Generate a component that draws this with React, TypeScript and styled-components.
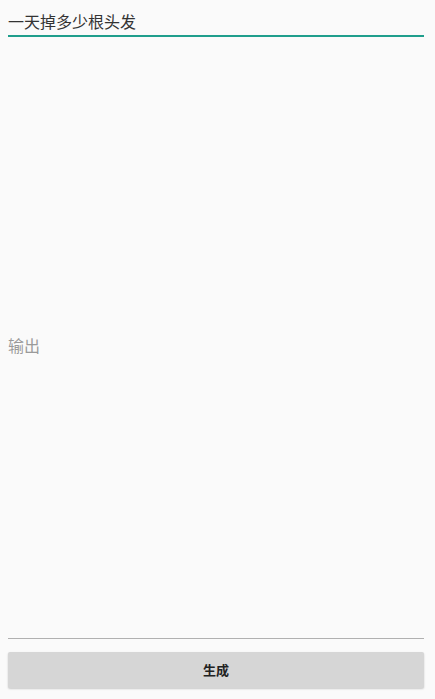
import React from "react";
import styled, { createGlobalStyle } from "styled-components";

const Global = createGlobalStyle`
  html, body { margin: 0; padding: 0; background: #fafafa; }
  body { font-family: Roboto, "Noto Sans CJK SC", "Noto Sans", sans-serif; }
`;

const Page = styled.div`
  height: 699px;
  box-sizing: border-box;
  padding: 0 11px 11px 8px;
  display: flex;
  flex-direction: column;
  background: #fafafa;
`;

const InputField = styled.div`
  height: 37px;
  box-sizing: border-box;
  padding-top: 13px;
  border-bottom: 2px solid #1f9e8c;
  font-size: 16px;
  line-height: 20px;
  color: #333;
  font-family: Roboto, "Noto Sans CJK SC", sans-serif;
`;

const OutputField = styled.div`
  flex: 1;
  display: flex;
  align-items: center;
  padding-top: 14px;
  border-bottom: 1.5px solid #b0b0b0;
  font-size: 16px;
  color: #9a9a9a;
  font-family: Roboto, "Noto Sans CJK SC", sans-serif;
`;

const Button = styled.button`
  margin-top: 13px;
  height: 36px;
  border: none;
  border-radius: 2px;
  background: #d6d6d6;
  box-shadow: 0 1px 2px rgba(0, 0, 0, 0.2);
  font-size: 13px;
  font-weight: 700;
  color: #222;
  font-family: Roboto, "Noto Sans CJK SC", sans-serif;
  display: flex;
  align-items: center;
  justify-content: center;
  padding: 0 0 2px;
`;

export default function App() {
  return (
    <>
      <Global />
      <Page>
        <InputField>一天掉多少根头发</InputField>
        <OutputField>输出</OutputField>
        <Button>生成</Button>
      </Page>
    </>
  );
}
